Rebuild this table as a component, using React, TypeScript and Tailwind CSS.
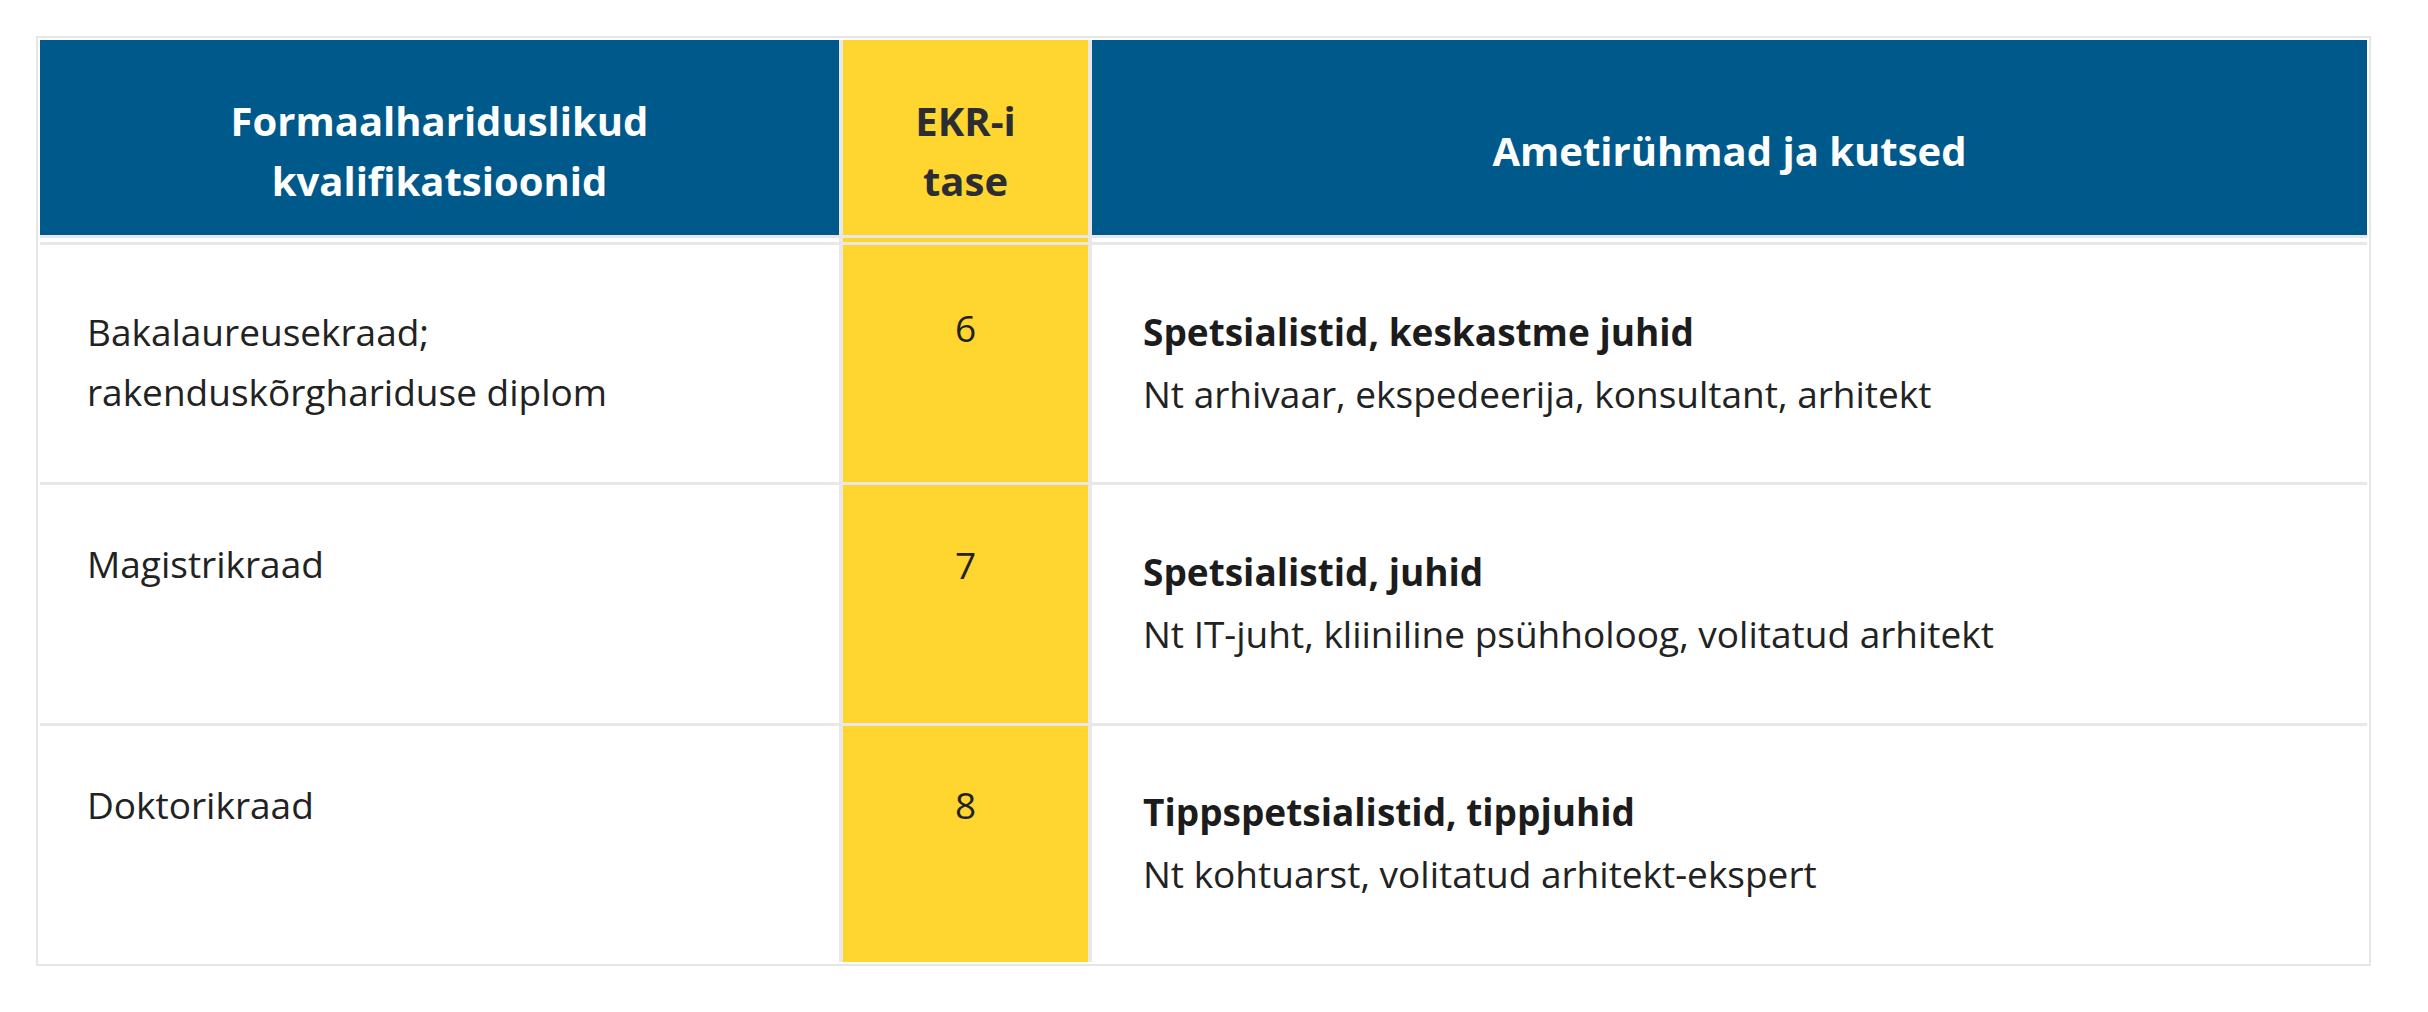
import React from 'react';

interface Row {
  qualification: React.ReactNode;
  level: string;
  title: string;
  examples: string;
  height: string;
  padFirst: string;
  padLevel: string;
  padLast: string;
}

const rows: Row[] = [
  {
    qualification: (
      <>
        Bakalaureusekraad;
        <br />
        rakenduskõrghariduse diplom
      </>
    ),
    level: '6',
    title: 'Spetsialistid, keskastme juhid',
    examples: 'Nt arhivaar, ekspedeerija, konsultant, arhitekt',
    height: 'h-[237px]',
    padFirst: 'pt-[57px]',
    padLevel: 'pt-[53px]',
    padLast: 'pt-[56px]',
  },
  {
    qualification: 'Magistrikraad',
    level: '7',
    title: 'Spetsialistid, juhid',
    examples: 'Nt IT-juht, kliiniline psühholoog, volitatud arhitekt',
    height: 'h-[238px]',
    padFirst: 'pt-[49px]',
    padLevel: 'pt-[50px]',
    padLast: 'pt-[56px]',
  },
  {
    qualification: 'Doktorikraad',
    level: '8',
    title: 'Tippspetsialistid, tippjuhid',
    examples: 'Nt kohtuarst, volitatud arhitekt-ekspert',
    height: 'h-[236px]',
    padFirst: 'pt-[49px]',
    padLevel: 'pt-[49px]',
    padLast: 'pt-[55px]',
  },
];

const cols = 'grid grid-cols-[799px_245px_1275px] gap-x-[4px]';

const App: React.FC = () => {
  return (
    <div className="min-h-screen w-full bg-white pt-[36px] pl-[36px] font-['Open_Sans',sans-serif]">
      <div className="w-[2335px] border-2 border-[#e6e6e6] bg-white p-[2px]">
        <div className="flex flex-col bg-[#e8e8e8]">
          {/* Header */}
          <div className={`${cols} h-[195px]`}>
            <div className="flex items-center justify-center bg-[#00598b] pt-[45px] pb-[18px] text-center text-[40px] font-bold leading-[60px] text-white">
              <span>
                Formaalhariduslikud
                <br />
                kvalifikatsioonid
              </span>
            </div>
            <div className="flex items-center justify-center bg-[#ffd530] pt-[45px] pb-[18px] text-center text-[40px] font-bold leading-[60px] text-[#2b2d33]">
              <span>
                EKR-i
                <br />
                tase
              </span>
            </div>
            <div className="flex items-center justify-center bg-[#00598b] pt-[45px] pb-[18px] text-center text-[40px] font-bold leading-[60px] text-white">
              <span>Ametirühmad ja kutsed</span>
            </div>
          </div>

          {/* Header / body separator */}
          <div className={`${cols} h-[10px]`}>
            <div className="border-y-[3px] border-[#e8e8e8] bg-white"></div>
            <div className="border-y-[3px] border-[#e8e8e8] bg-[#ffd530]"></div>
            <div className="border-y-[3px] border-[#e8e8e8] bg-white"></div>
          </div>

          {/* Body rows */}
          {rows.map((row, i) => (
            <div key={row.level} className={`${cols} ${row.height} ${i > 0 ? 'mt-[3px]' : ''}`}>
              <div className={`bg-white pl-[47px] pr-6 text-[37px] leading-[60px] text-[#222] ${row.padFirst}`}>
                {row.qualification}
              </div>
              <div className={`bg-[#ffd530] text-center text-[37px] leading-[60px] text-[#222] ${row.padLevel}`}>
                {row.level}
              </div>
              <div className={`bg-white pl-[51px] pr-6 text-[37px] leading-[62px] text-[#222] ${row.padLast}`}>
                <div className="font-bold text-[#1c1c1c]">{row.title}</div>
                <div>{row.examples}</div>
              </div>
            </div>
          ))}
        </div>
      </div>
    </div>
  );
};

export default App;
